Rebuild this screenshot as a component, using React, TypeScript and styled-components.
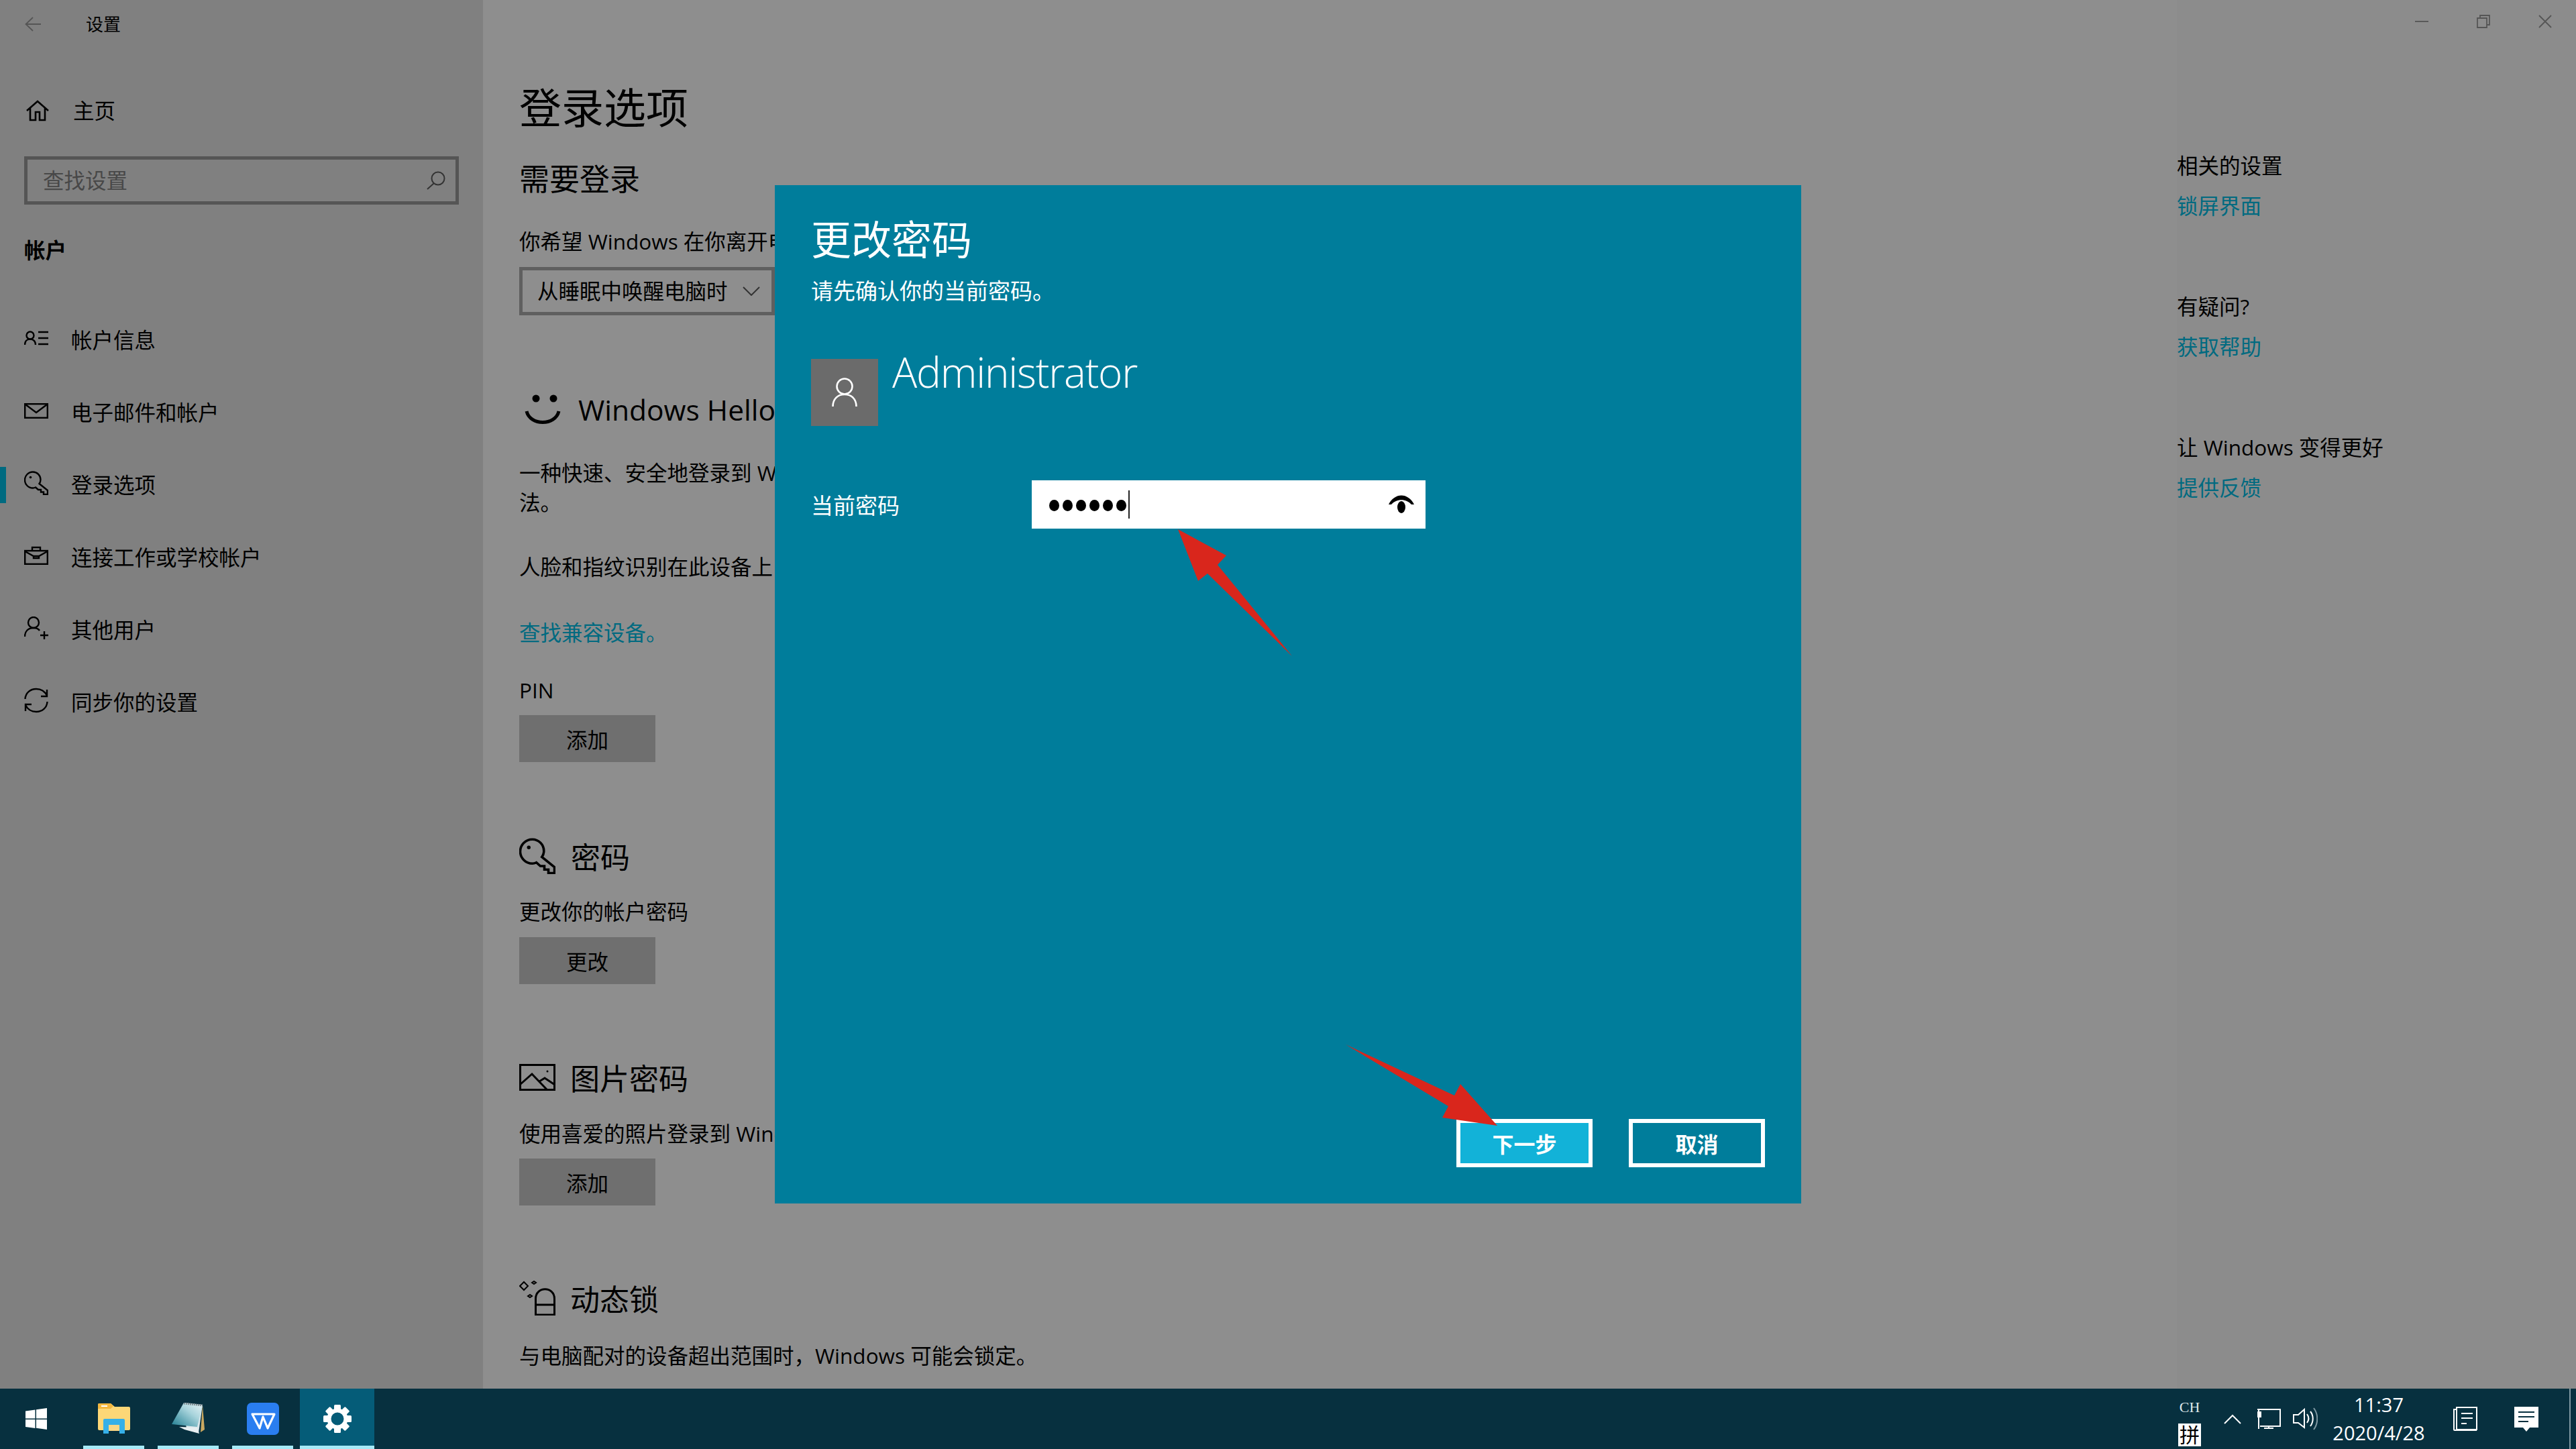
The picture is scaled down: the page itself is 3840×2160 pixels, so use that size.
import React from "react";
import styled, { createGlobalStyle } from "styled-components";

const GlobalStyle = createGlobalStyle`
  html, body {
    margin: 0;
    padding: 0;
    width: 3840px;
    height: 2160px;
    overflow: hidden;
    background: #8e8e8e;
  }
  * {
    box-sizing: border-box;
  }
  svg {
    display: block;
    flex-shrink: 0;
  }
`;

const FONT = `"Open Sans", "Noto Sans CJK SC", sans-serif`;

const Screen = styled.div`
  position: relative;
  display: flex;
  flex-direction: column;
  width: 3840px;
  height: 2160px;
  overflow: hidden;
  font-family: ${FONT};
  font-size: 31.5px;
  color: #000;
`;

const Win = styled.div`
  display: flex;
  height: 2070px;
  overflow: hidden;
`;

/* sidebar */
const Sidebar = styled.div`
  width: 720px;
  flex-shrink: 0;
  background: #808080;
`;

const TitleRow = styled.div`
  display: flex;
  align-items: center;
  height: 72px;
  padding-left: 37px;
`;

const AppName = styled.span`
  margin-left: 67px;
  font-size: 26px;
  line-height: 72px;
`;

const NudgedLabel = styled.span`
  margin-top: -4px;
`;

const HomeRow = styled.div`
  display: flex;
  align-items: center;
  height: 72px;
  margin-top: 57px;
  padding-left: 39px;
  gap: 36px;
`;

const SearchBox = styled.div`
  display: flex;
  align-items: center;
  justify-content: space-between;
  width: 648px;
  height: 72px;
  margin: 32px 0 0 36px;
  padding: 0 15px 0 23px;
  border: 5px solid #555;
  color: #484848;
`;

const GroupTitle = styled.div`
  margin: 46px 0 58px 36px;
  font-weight: 700;
  line-height: 44px;
`;

const NavRow = styled.div<{ $active?: boolean }>`
  display: flex;
  align-items: center;
  gap: 34px;
  height: 108px;
  padding-left: 36px;
  position: relative;

  &::before {
    content: "";
    display: ${(p) => (p.$active ? "block" : "none")};
    position: absolute;
    left: 0;
    top: 27px;
    width: 9px;
    height: 54px;
    background: #006a80;
  }
`;

const NavIcon = styled.span`
  display: flex;
  width: 36px;
  justify-content: center;
  margin-bottom: 6px;
`;

/* main column */
const Main = styled.div`
  flex: 1;
  padding: 120px 0 0 54px;
  background: #8e8e8e;
  white-space: nowrap;
`;

const PageTitle = styled.h1`
  margin: 0;
  font-size: 63px;
  font-weight: 400;
  line-height: 80px;
`;

const SubTitle = styled.h2`
  margin: 37px 0 0;
  font-size: 45px;
  font-weight: 400;
  line-height: 60px;
`;

const Text = styled.div<{ $top?: number }>`
  margin-top: ${(p) => p.$top ?? 0}px;
  line-height: 44px;
`;

/* the dialog covers everything right of this width */
const CutText = styled(Text)`
  width: 381px;
  overflow: hidden;
`;

const LinkText = styled(Text)`
  color: #006a80;
`;

const Select = styled.div`
  display: flex;
  align-items: center;
  justify-content: space-between;
  width: 381px;
  height: 72px;
  margin-top: 16px;
  padding: 0 17px 0 22px;
  border: 5px solid #5f5f5f;
`;

const SectionHead = styled.div<{ $top: number; $gap: number }>`
  display: flex;
  align-items: center;
  gap: ${(p) => p.$gap}px;
  height: 60px;
  margin-top: ${(p) => p.$top}px;
  font-size: 44px;
`;

const HelloName = styled.span`
  font-size: 42.5px;
`;

const HelloIcon = styled.span`
  margin-left: 8px;
`;

const GreyButton = styled.div<{ $top: number }>`
  display: flex;
  align-items: center;
  justify-content: center;
  width: 203px;
  height: 70px;
  margin-top: ${(p) => p.$top}px;
  background: #6f6f6f;
`;

/* right column */
const Aside = styled.div`
  width: 595px;
  flex-shrink: 0;
  background: #8c8c8c;
`;

const WinControls = styled.div`
  display: flex;
  gap: 72px;
  height: 21px;
  margin: 21px 0 0 355px;
  align-items: center;
`;

const AsideList = styled.div`
  margin-top: 183px;
  white-space: nowrap;
`;

const AsideBlock = styled.div`
  margin-bottom: 106px;
`;

const AsideText = styled.div`
  line-height: 44px;
`;

const AsideLink = styled.div`
  margin-top: 16px;
  line-height: 44px;
  color: #006a80;
`;

/* dialog */
const Dialog = styled.div`
  position: absolute;
  left: 1155px;
  top: 276px;
  display: flex;
  flex-direction: column;
  width: 1530px;
  height: 1518px;
  padding: 46px 54px 54px;
  background: #007d9b;
  color: #fff;
`;

const DialogTitle = styled.div`
  font-size: 60px;
  line-height: 70px;
`;

const DialogSub = styled.div`
  margin-top: 20px;
  font-size: 33px;
  line-height: 44px;
`;

const UserRow = styled.div`
  display: flex;
  margin-top: 79px;
  gap: 21px;
`;

const Avatar = styled.div`
  display: flex;
  align-items: center;
  justify-content: center;
  width: 100px;
  height: 100px;
  background: #6b6b6b;
`;

const UserName = styled.div`
  margin-top: -27px;
  font-size: 62px;
  font-weight: 300;
  line-height: 92px;
  letter-spacing: -1.25px;
`;

const PasswordRow = styled.div`
  display: flex;
  align-items: center;
  margin-top: 81px;
`;

const PasswordLabel = styled.div`
  width: 329px;
  font-size: 33px;
`;

const PasswordInput = styled.div`
  display: flex;
  align-items: center;
  width: 587px;
  height: 72px;
  padding: 0 17px 0 26px;
  background: #fff;
`;

const Dots = styled.div`
  display: flex;
  gap: 5px;
  margin-top: 2px;
`;

const Dot = styled.span`
  width: 15px;
  height: 17px;
  border-radius: 50%;
  background: #000;
`;

const Caret = styled.span`
  width: 2px;
  height: 42px;
  margin-left: 3px;
  background: #222;
`;

const EyeWrap = styled.span`
  margin-left: auto;
`;

const DialogActions = styled.div`
  display: flex;
  justify-content: flex-end;
  gap: 54px;
  margin-top: auto;
`;

const DialogButton = styled.div<{ $primary?: boolean }>`
  display: flex;
  align-items: center;
  justify-content: center;
  width: 203px;
  height: 72px;
  border: 6px solid #fff;
  background: ${(p) => (p.$primary ? "#12b2d8" : "transparent")};
  font-size: 32px;
  font-weight: 700;
`;

/* arrows drawn over the screenshot */
const Markup = styled.svg`
  position: absolute;
  left: 0;
  top: 0;
  pointer-events: none;
`;

/* taskbar */
const Taskbar = styled.div`
  display: flex;
  height: 90px;
  background: #07303f;
  color: #fff;
`;

const StartTile = styled.div`
  display: flex;
  align-items: center;
  width: 114px;
  padding-left: 38px;
`;

const Tile = styled.div<{ $active?: boolean }>`
  position: relative;
  display: flex;
  align-items: center;
  justify-content: center;
  width: 111px;
  background: ${(p) => (p.$active ? "#055c78" : "transparent")};

  &::after {
    content: "";
    position: absolute;
    bottom: 0;
    height: 5px;
    left: ${(p) => (p.$active ? 0 : 10)}px;
    right: ${(p) => (p.$active ? 0 : 10)}px;
    background: #a6eaf8;
  }
`;

const Tray = styled.div`
  display: flex;
  align-items: center;
  margin-left: auto;
  height: 100%;
`;

const ImeCol = styled.div`
  display: flex;
  flex-direction: column;
  align-items: center;
  width: 34px;
  padding-top: 8px;
`;

const ImeLang = styled.div`
  font-family: "Liberation Serif", serif;
  font-size: 22px;
  line-height: 30px;
  color: #dfe7ea;
`;

const ImeMode = styled.div`
  width: 34px;
  height: 34px;
  margin-top: 9px;
  background: #fff;
  color: #000;
  font-size: 30px;
  line-height: 34px;
  text-align: center;
`;

const TrayItem = styled.div<{ $left: number }>`
  margin-left: ${(p) => p.$left}px;
`;

const Clock = styled.div`
  width: 140px;
  margin-left: 21px;
  text-align: center;
  font-size: 29px;
  line-height: 42px;
`;

const EdgeLine = styled.div`
  width: 2px;
  height: 100%;
  margin: 0 8px 0 46px;
  background: #7f98a2;
`;

/* icons */
const ic = { fill: "none", stroke: "#000", strokeWidth: 2.4 };

const HomeIcon = () => (
  <svg width="34" height="32" viewBox="0 0 34 32" {...ic} strokeWidth={2.6}>
    <path d="M1 16 17 2l16 14M6 12v18h8V18h6v12h8V12" />
  </svg>
);

const PersonListIcon = () => (
  <svg width="36" height="22" viewBox="0 0 36 22" {...ic}>
    <circle cx="9" cy="7" r="5.5" />
    <path d="M1 21c0-5 3-8.500 8-8.500s8 3.500 8 8.500M21 2h15M21 11h15M21 20h15" />
  </svg>
);

const MailIcon = () => (
  <svg width="36" height="23" viewBox="0 0 36 23" {...ic}>
    <rect x="1.200" y="1.200" width="33.600" height="20.600" />
    <path d="m2 2 16 12L34 2" />
  </svg>
);

const KeyIcon = ({ size = 36 }: { size?: number }) => (
  <svg width={size} height={size} viewBox="0 0 36 36" {...ic}>
    <path d="M13 1.500A11.500 11.500 0 0 1 24.500 13q0 3.500-2 6L35 29v6h-6v-3.500h-4V28h-4l-4-3.500q-2 1-4 1a12 12 0 0 1 0-24Z" />
    <circle cx="9.500" cy="9.500" r="1.800" fill="#000" stroke="none" />
  </svg>
);

const CaseIcon = () => (
  <svg width="36" height="28" viewBox="0 0 36 28" {...ic}>
    <rect x="1.200" y="7" width="33.600" height="19.800" />
    <path d="M12 7V2h12v5M1.500 8 14 15h8l12.500-7M14 14v4h8v-4" />
  </svg>
);

const AddUserIcon = () => (
  <svg width="36" height="35" viewBox="0 0 36 35" {...ic}>
    <circle cx="14" cy="9" r="8" />
    <path d="M1 30c0-8 5-13 13-13 4 0 7 1 9 4M30 22v12M24 28h12" />
  </svg>
);

const SyncIcon = () => (
  <svg width="36" height="38" viewBox="0 0 36 38" {...ic}>
    <path d="M1.500 17C2 8 9 2 18 2c7 0 13 4 16 10M34 3v10h-9M34.500 21c-.5 9-7.500 15-16.500 15-7 0-13-4-16-10M2 35V25h9" />
  </svg>
);

const SearchIcon = () => (
  <svg width="28" height="28" viewBox="0 0 28 28" fill="none" stroke="#333" strokeWidth="2">
    <circle cx="17" cy="11" r="9.500" />
    <path d="M11 18 1 27" />
  </svg>
);

const BackIcon = () => (
  <svg width="24" height="22" viewBox="0 0 24 22" fill="none" stroke="#555" strokeWidth="1.800">
    <path d="M24 11H2M12 1 1.500 11 12 21" />
  </svg>
);

const ChevronIcon = () => (
  <svg width="26" height="14" viewBox="0 0 26 14" fill="none" stroke="#333" strokeWidth="2">
    <path d="m1 1 12 12L25 1" />
  </svg>
);

const SmileIcon = () => (
  <svg width="54" height="46" viewBox="0 0 54 46" fill="none" stroke="#000" strokeWidth="5">
    <circle cx="17" cy="7" r="5.500" fill="#000" stroke="none" />
    <circle cx="43" cy="7" r="5.500" fill="#000" stroke="none" />
    <path d="M3 26c5 22 43 22 48 0" />
  </svg>
);

const PictureIcon = () => (
  <svg width="54" height="40" viewBox="0 0 54 40" {...ic} strokeWidth={3}>
    <rect x="1.500" y="1.500" width="51" height="37" />
    <path d="m2 30 17-15 22 23M30 26l8-5 15 10" />
    <circle cx="42" cy="11" r="1.500" fill="#000" stroke="none" />
  </svg>
);

const LockIcon = () => (
  <svg width="54" height="52" viewBox="0 0 54 52" {...ic} strokeWidth={3}>
    <path d="M24.500 36h28v15h-28zM24.500 36v-9c0-19 28-19 28 0v9" />
    <path d="m1 8 6-6 6 6-6 6zM19 3l3-2 3 2-3 2zM13 23l3-2 3 2-3 2z" strokeWidth={2} />
  </svg>
);

const DialogUserIcon = () => (
  <svg width="38" height="44" viewBox="0 0 38 44" fill="none" stroke="#fff" strokeWidth="2.600">
    <circle cx="19" cy="13" r="11.500" />
    <path d="M1.500 43c0-11 7-18 17.500-18s17.500 7 17.500 18" />
  </svg>
);

const EyeIcon = () => (
  <svg width="38" height="28" viewBox="0 0 38 28">
    <path d="M0 14C9-4 29-4 38 14h-4C26 5 12 5 4 14Z" fill="#000" />
    <ellipse cx="19" cy="18" rx="6" ry="9" fill="#000" />
  </svg>
);

const WinControlIcons = () => (
  <WinControls>
    <svg width="20" height="20" viewBox="0 0 20 20" fill="none" stroke="#555" strokeWidth="1.800">
      <path d="M0 10h20" />
    </svg>
    <svg width="20" height="20" viewBox="0 0 20 20" fill="none" stroke="#555" strokeWidth="1.800">
      <path d="M1 5h14v14H1zM5 5V1h14v14h-4" />
    </svg>
    <svg width="20" height="20" viewBox="0 0 20 20" fill="none" stroke="#555" strokeWidth="1.800">
      <path d="m1 1 18 18M19 1 1 19" />
    </svg>
  </WinControls>
);

const WinLogo = () => (
  <svg width="32" height="32" viewBox="0 0 32 32" fill="#fff">
    <path d="M0 4.500 14.500 2.500v13H0zM16 2.300 32 0v15.500H16zM0 17h14.500v13L0 28zM16 17h16v15l-16-2.200z" />
  </svg>
);

const FolderIcon = () => (
  <svg width="48" height="48" viewBox="0 0 48 48">
    <path d="M0 3q0-2 2-2h17l6 5h21q2 0 2 2v31q0 2-2 2H2q-2 0-2-2Z" fill="#fcd777" />
    <path d="M0 3q0-2 2-2h17l4 4-4 4H0Z" fill="#f2b73f" />
    <path d="M5 4h9v2H5z" fill="#fff" />
    <path d="M8 46V26q0-2 2-2h28q2 0 2 2v20h-8V33H16v13Z" fill="#36b0e8" />
    <path d="M16 33h16v9H16z" fill="#fbd784" />
  </svg>
);

const NotepadIcon = () => (
  <svg width="50" height="48" viewBox="0 0 50 48">
    <defs>
      <linearGradient id="pad" x1="0" y1="1" x2="1" y2="0">
        <stop offset="0" stopColor="#1d7c90" />
        <stop offset="0.6" stopColor="#a8d4dc" />
        <stop offset="1" stopColor="#eaf5f7" />
      </linearGradient>
    </defs>
    <path d="M46 4l3 36-6 4z" fill="#c9a860" />
    <path d="M18 0 46 3l-6 42-18-5z" fill="#d9e6ea" />
    <path d="M18 0 46 4 38 36 0 32Z" fill="url(#pad)" />
    <path d="M11 36l27 1 3 9-22-6z" fill="#e8eff1" />
    <path d="M18 1l28 3" stroke="#7a8a90" strokeWidth="3" strokeDasharray="2 1" fill="none" />
  </svg>
);

const WpsIcon = () => (
  <svg width="48" height="48" viewBox="0 0 48 48">
    <rect width="48" height="48" rx="7" fill="#2a7ef0" />
    <path d="M8 17h33L31 38 24 21l-5 17z" fill="none" stroke="#fff" strokeWidth="3.200" strokeLinejoin="round" />
  </svg>
);

const GearIcon = () => {
  const teeth = [0, 45, 90, 135, 180, 225, 270, 315];
  return (
    <svg width="42" height="42" viewBox="0 0 42 42">
      {teeth.map((a) => (
        <rect key={a} x="16" y="0" width="10" height="10" rx="1.500" fill="#fff" transform={`rotate(${a} 21 21)`} />
      ))}
      <circle cx="21" cy="21" r="12.500" fill="none" stroke="#fff" strokeWidth="6" />
    </svg>
  );
};

const trayStroke = { fill: "none", stroke: "#fff", strokeWidth: 2 };

const TrayChevron = () => (
  <svg width="26" height="15" viewBox="0 0 26 15" {...trayStroke}>
    <path d="m1 14 12-12 12 12" />
  </svg>
);

const NetworkIcon = () => (
  <svg width="36" height="30" viewBox="0 0 36 30" {...trayStroke}>
    <path d="M1 1h34v25H5M3 1v29M18 26v3M11 29h14" />
    <rect x="1" y="4" width="6" height="9" fill="#fff" stroke="none" />
  </svg>
);

const SpeakerIcon = () => (
  <svg width="37" height="34" viewBox="0 0 37 34" {...trayStroke}>
    <path d="M1 11h7l9-8v27l-9-7H1z" />
    <path d="M21 10c3 4 3 9 0 13M26 6c5 6 5 15 0 22" />
    <path d="M31 1c7 9 7 23 0 32" stroke="#7f98a2" />
  </svg>
);

const NewsIcon = () => (
  <svg width="36" height="36" viewBox="0 0 36 36" {...trayStroke}>
    <path d="M5 1h30v33H5zM5 4H1v30q0 1 1 1h33" />
    <path d="M12 10h17M12 17h17M12 25h8" />
  </svg>
);

const ActionIcon = () => (
  <svg width="36" height="37" viewBox="0 0 36 37">
    <path d="M0 0h36v31H23l-5 6-5-6H0Z" fill="#fff" />
    <path d="M6 8h24M6 15h24M6 22h15" stroke="#07303f" strokeWidth="2" />
  </svg>
);

type NavItem = { label: string; icon: React.ReactNode; active?: boolean };

const navItems: NavItem[] = [
  { label: "帐户信息", icon: <PersonListIcon /> },
  { label: "电子邮件和帐户", icon: <MailIcon /> },
  { label: "登录选项", icon: <KeyIcon />, active: true },
  { label: "连接工作或学校帐户", icon: <CaseIcon /> },
  { label: "其他用户", icon: <AddUserIcon /> },
  { label: "同步你的设置", icon: <SyncIcon /> },
];

const asideBlocks = [
  { title: "相关的设置", link: "锁屏界面" },
  { title: "有疑问?", link: "获取帮助" },
  { title: "让 Windows 变得更好", link: "提供反馈" },
];

export default function App() {
  return (
    <Screen>
      <GlobalStyle />
      <Win>
        <Sidebar>
          <TitleRow>
            <BackIcon />
            <AppName>设置</AppName>
          </TitleRow>
          <HomeRow>
            <HomeIcon />
            <NudgedLabel>主页</NudgedLabel>
          </HomeRow>
          <SearchBox>
            <NudgedLabel>查找设置</NudgedLabel>
            <SearchIcon />
          </SearchBox>
          <GroupTitle>帐户</GroupTitle>
          {navItems.map((item) => (
            <NavRow key={item.label} $active={item.active}>
              <NavIcon>{item.icon}</NavIcon>
              <NudgedLabel>{item.label}</NudgedLabel>
            </NavRow>
          ))}
        </Sidebar>

        <Main>
          <PageTitle>登录选项</PageTitle>
          <SubTitle>需要登录</SubTitle>
          <CutText $top={41}>你希望 Windows 在你离开电</CutText>
          <Select>
            <NudgedLabel>从睡眠中唤醒电脑时</NudgedLabel>
            <ChevronIcon />
          </Select>
          <SectionHead $top={110} $gap={26}>
            <HelloIcon>
              <SmileIcon />
            </HelloIcon>
            <HelloName>Windows Hello</HelloName>
          </SectionHead>
          <CutText $top={43}>一种快速、安全地登录到 W</CutText>
          <Text>法。</Text>
          <CutText $top={52}>人脸和指纹识别在此设备上</CutText>
          <LinkText $top={54}>查找兼容设备。</LinkText>
          <Text $top={42}>PIN</Text>
          <GreyButton $top={15}>添加</GreyButton>
          <SectionHead $top={110} $gap={23}>
            <KeyIcon size={54} />
            <span>密码</span>
          </SectionHead>
          <Text $top={31}>更改你的帐户密码</Text>
          <GreyButton $top={16}>更改</GreyButton>
          <SectionHead $top={109} $gap={22}>
            <PictureIcon />
            <span>图片密码</span>
          </SectionHead>
          <CutText $top={32}>使用喜爱的照片登录到 Wind</CutText>
          <GreyButton $top={15}>添加</GreyButton>
          <SectionHead $top={108} $gap={22}>
            <LockIcon />
            <span>动态锁</span>
          </SectionHead>
          <Text $top={34}>与电脑配对的设备超出范围时，Windows 可能会锁定。</Text>
        </Main>

        <Aside>
          <WinControlIcons />
          <AsideList>
            {asideBlocks.map((b) => (
              <AsideBlock key={b.link}>
                <AsideText>{b.title}</AsideText>
                <AsideLink>{b.link}</AsideLink>
              </AsideBlock>
            ))}
          </AsideList>
        </Aside>
      </Win>

      <Taskbar>
        <StartTile>
          <WinLogo />
        </StartTile>
        <Tile>
          <FolderIcon />
        </Tile>
        <Tile>
          <NotepadIcon />
        </Tile>
        <Tile>
          <WpsIcon />
        </Tile>
        <Tile $active>
          <GearIcon />
        </Tile>
        <Tray>
          <ImeCol>
            <ImeLang>CH</ImeLang>
            <ImeMode>拼</ImeMode>
          </ImeCol>
          <TrayItem $left={34}>
            <TrayChevron />
          </TrayItem>
          <TrayItem $left={23}>
            <NetworkIcon />
          </TrayItem>
          <TrayItem $left={18}>
            <SpeakerIcon />
          </TrayItem>
          <Clock>
            <div>11:37</div>
            <div>2020/4/28</div>
          </Clock>
          <TrayItem $left={41}>
            <NewsIcon />
          </TrayItem>
          <TrayItem $left={55}>
            <ActionIcon />
          </TrayItem>
          <EdgeLine />
        </Tray>
      </Taskbar>

      <Dialog>
        <DialogTitle>更改密码</DialogTitle>
        <DialogSub>请先确认你的当前密码。</DialogSub>
        <UserRow>
          <Avatar>
            <DialogUserIcon />
          </Avatar>
          <UserName>Administrator</UserName>
        </UserRow>
        <PasswordRow>
          <PasswordLabel>当前密码</PasswordLabel>
          <PasswordInput>
            <Dots>
              {[0, 1, 2, 3, 4, 5].map((i) => (
                <Dot key={i} />
              ))}
            </Dots>
            <Caret />
            <EyeWrap>
              <EyeIcon />
            </EyeWrap>
          </PasswordInput>
        </PasswordRow>
        <DialogActions>
          <DialogButton $primary>下一步</DialogButton>
          <DialogButton>取消</DialogButton>
        </DialogActions>
      </Dialog>

      <Markup width="3840" height="2160" viewBox="0 0 3840 2160">
        <path d="M1756 789 1828 828 1815 842 1926 978 1800 855 1786 866Z" fill="#d9261c" />
        <path d="M2006 1557 2168 1633 2177 1616 2232 1678 2150 1666 2159 1649Z" fill="#d9261c" />
      </Markup>
    </Screen>
  );
}
